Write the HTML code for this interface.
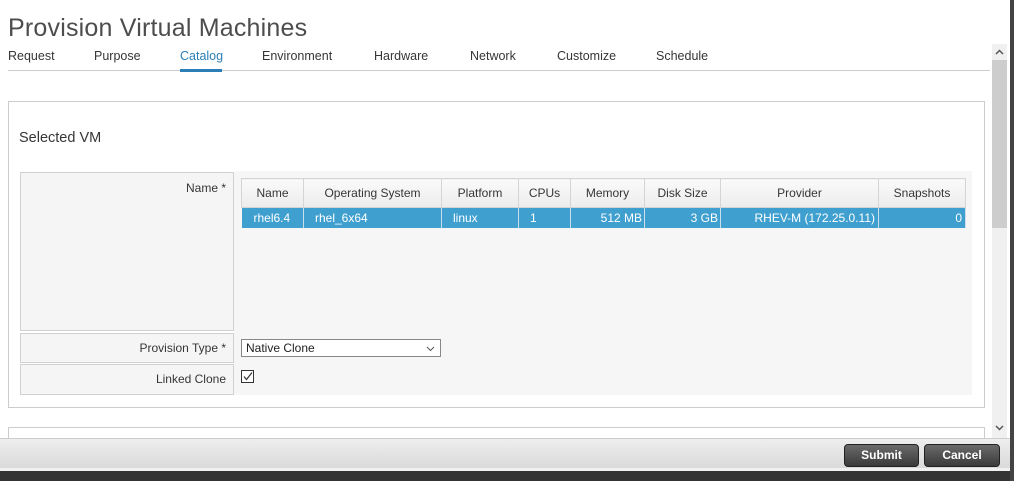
<!DOCTYPE html>
<html><head><style>
*{box-sizing:border-box;margin:0;padding:0}
body{width:1014px;height:481px;overflow:hidden;background:#fff;font-family:"Liberation Sans",sans-serif;position:relative;color:#363636}
.abs{position:absolute}
h1{position:absolute;left:8px;top:14px;font-weight:normal;font-size:25px;color:#4d4d4d;letter-spacing:0.2px}
.tab{position:absolute;top:49px;font-size:12.5px;color:#363636}
td,th{font-size:12px}
table{border-collapse:collapse;position:absolute;left:241px;top:178px;width:725px}
th{height:29px;background:linear-gradient(#fafafa,#ececec);border:1px solid #d4d4d4;font-weight:normal;color:#363636;text-align:center}
td{height:20px;background:#3f9fcf;color:#fff;border-right:1px solid #cde;padding:0 8px}
.lbl{position:absolute;left:20px;width:214px;background:#f5f5f5;border:1px solid #d1d1d1;text-align:right;padding-right:7px;font-size:12px;color:#363636}
.btn{position:absolute;top:444px;height:23px;border-radius:4px;background:linear-gradient(#6a6a6a,#3a3a3a);border:1px solid #222;color:#fff;font-weight:bold;font-size:12px;text-align:center;line-height:21px}
</style></head><body>
<h1>Provision Virtual Machines</h1>
<div class="tab" style="left:8px">Request</div>
<div class="tab" style="left:94px">Purpose</div>
<div class="tab" style="left:180px;color:#2b7fb6">Catalog</div>
<div class="tab" style="left:262px">Environment</div>
<div class="tab" style="left:374px">Hardware</div>
<div class="tab" style="left:470px">Network</div>
<div class="tab" style="left:557px">Customize</div>
<div class="tab" style="left:656px">Schedule</div>
<div class="abs" style="left:8px;top:70px;width:982px;height:1px;background:#ccc"></div>
<div class="abs" style="left:180px;top:69px;width:42px;height:3px;background:#2b7fb6"></div>

<div class="abs" style="left:8px;top:101px;width:977px;height:307px;border:1px solid #ccc"></div>
<div class="abs" style="left:19px;top:130px;font-size:14.5px;color:#363636">Selected VM</div>
<div class="abs" style="left:234px;top:171px;width:738px;height:224px;background:#f6f6f6"></div>
<div class="lbl" style="top:172px;height:159px;padding-top:8px">Name *</div>
<div class="lbl" style="top:333px;height:30px;line-height:28px">Provision Type *</div>
<div class="lbl" style="top:364px;height:31px;line-height:29px">Linked Clone</div>
<table>
<tr><th style="width:62px">Name</th><th style="width:138px">Operating System</th><th style="width:77px">Platform</th><th style="width:52px">CPUs</th><th style="width:74px">Memory</th><th style="width:76px">Disk Size</th><th style="width:158px">Provider</th><th>Snapshots</th></tr>
<tr><td style="padding-left:12px">rhel6.4</td><td style="padding-left:11px">rhel_6x64</td><td style="padding-left:11px">linux</td><td style="padding-left:11px">1</td><td style="text-align:right;padding-right:2px">512 MB</td><td style="text-align:right;padding-right:2px">3 GB</td><td style="text-align:right;padding-right:3px">RHEV-M (172.25.0.11)</td><td style="text-align:right;padding-right:3px">0</td></tr>
</table>
<div class="abs" style="left:241px;top:339px;width:200px;height:18px;border:1px solid #888;background:#fff;font-size:12px;line-height:16px;padding-left:4px;color:#222">Native Clone<svg width="9" height="6" style="position:absolute;right:5px;top:6px"><path d="M1 1 L4.5 4.5 L8 1" fill="none" stroke="#555" stroke-width="1"/></svg></div>
<div class="abs" style="left:241px;top:370px;width:13px;height:13px;border:1px solid #333;background:#fff"><svg width="11" height="11" style="position:absolute;left:0;top:0"><path d="M2 5.5 L4.5 8.5 L10 1.5" fill="none" stroke="#333" stroke-width="1.2"/></svg></div>

<div class="abs" style="left:8px;top:427px;width:977px;height:20px;border:1px solid #ccc"></div>
<div class="abs" style="left:0;top:438px;width:1010px;height:33px;background:linear-gradient(#eee,#d8d8d8);border-top:1px solid #ccc"></div>
<div class="abs" style="left:0;top:468px;width:1014px;height:3px;background:#f0f0f0"></div>
<div class="abs" style="left:0;top:471px;width:1014px;height:10px;background:#333"></div>
<div class="btn" style="left:844px;width:75px">Submit</div>
<div class="btn" style="left:924px;width:76px">Cancel</div>

<div class="abs" style="left:992px;top:44px;width:15px;height:394px;background:#f0f0f0"></div>
<div class="abs" style="left:992px;top:60px;width:15px;height:168px;background:#cdcdcd"></div>
<svg class="abs" style="left:995px;top:49px" width="9" height="6"><path d="M1 5 L4.5 1.5 L8 5" fill="none" stroke="#555" stroke-width="1.5"/></svg>
<svg class="abs" style="left:995px;top:425px" width="9" height="6"><path d="M1 1 L4.5 4.5 L8 1" fill="none" stroke="#555" stroke-width="1.5"/></svg>
<div class="abs" style="left:1010px;top:0;width:4px;height:481px;background:#444"></div>
</body></html>
